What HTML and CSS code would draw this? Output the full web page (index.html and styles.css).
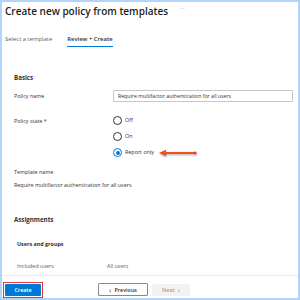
FILE: index.html
```html
<!DOCTYPE html>
<html>
<head>
<meta charset="utf-8">
<link rel="stylesheet" href="styles.css">
</head>
<body>
<div class="frame">
  <div class="header">
    <h1 class="title">Create new policy from templates</h1>
    <span class="more">···</span>
  </div>
  <div class="tabs">
    <span class="tab">Select a template</span>
    <span class="tab active">Review + Create</span>
  </div>
  <div class="content">
    <h2 class="section">Basics</h2>
    <div class="row name-row">
      <span class="label">Policy name</span>
      <div class="input">Require multifactor authentication for all users</div>
    </div>
    <div class="row state-row">
      <span class="label">Policy state *</span>
      <div class="radios">
        <div class="radio"><span class="circle"></span><span>Off</span></div>
        <div class="radio"><span class="circle"></span><span>On</span></div>
        <div class="radio checked"><span class="circle"></span><span>Report only</span>
          <svg class="arrow" width="42" height="12" viewBox="0 0 42 12">
            <defs>
              <filter id="sh" x="-20%" y="-50%" width="140%" height="200%">
                <feDropShadow dx="0.5" dy="1" stdDeviation="0.8" flood-color="#000" flood-opacity="0.35"/>
              </filter>
            </defs>
            <g filter="url(#sh)">
              <line x1="7" y1="6" x2="38" y2="6" stroke="#f0501c" stroke-width="2" stroke-linecap="round"/>
              <polygon points="2,6 9,2.8 9,9.2" fill="#f0501c"/>
              <circle cx="38" cy="6" r="1.6" fill="#e8401a"/>
            </g>
          </svg>
        </div>
      </div>
    </div>
    <div class="label tname">Template name</div>
    <div class="label tvalue">Require multifactor authentication for all users</div>
    <h2 class="section assign">Assignments</h2>
    <h3 class="sub">Users and groups</h3>
    <div class="pair">
      <span class="plabel">Included users</span>
      <span class="pvalue">All users</span>
    </div>
  </div>
  <div class="footer">
    <div class="create-wrap"><button class="btn primary">Create</button></div>
    <button class="btn prev"><span class="chev">&lsaquo;</span>Previous</button>
    <button class="btn next">Next<span class="chev">&rsaquo;</span></button>
  </div>
</div>
</body>
</html>
```
FILE: styles.css
```css
html, body {
  margin: 0;
  padding: 0;
  background: #fff;
}
body {
  font-family: "Open Sans", "Noto Sans", sans-serif;
  color: #323130;
}
.frame {
  width: 300px;
  height: 300px;
  box-sizing: border-box;
  border: 2px solid #b1d4f8;
  display: flex;
  flex-direction: column;
  position: relative;
  overflow: hidden;
}
.header {
  display: flex;
  align-items: flex-start;
  padding: 1px 0 0 3px;
  height: 20px;
  flex: none;
}
.title {
  margin: 0;
  font-size: 10px;
  font-weight: 600;
  line-height: 16px;
  color: #201f1e;
}
.more {
  font-size: 6px;
  color: #8a8886;
  margin-left: 12px;
  line-height: 10px;
}
.tabs {
  display: flex;
  gap: 15px;
  padding: 12px 0 0 3px;
  height: 17px;
  flex: none;
}
.tab {
  font-size: 5.9px;
  color: #605e5c;
  line-height: 8px;
  height: 11px;
}
.tab.active {
  font-weight: 600;
  color: #323130;
  border-bottom: 1.5px solid #0078d4;
}
.content {
  flex: 1;
  min-height: 0;
  padding: 22px 0 0 12px;
  font-size: 5.4px;
}
.section {
  margin: 0;
  font-size: 6.2px;
  font-weight: 700;
  line-height: 8px;
  color: #323130;
}
.label {
  font-size: 5.4px;
  color: #323130;
  line-height: 8px;
}
.row {
  display: flex;
}
.row .label {
  width: 99px;
}
.name-row {
  margin-top: 8px;
  align-items: center;
}
.input {
  width: 180px;
  height: 12px;
  box-sizing: border-box;
  border: 1px solid #c8c6c4;
  border-radius: 1px;
  font-size: 5.2px;
  line-height: 10px;
  padding-left: 4px;
  color: #323130;
  white-space: nowrap;
}
.state-row {
  margin-top: 14px;
}
.state-row .label {
  margin-top: 1px;
}
.radios {
  display: flex;
  flex-direction: column;
  gap: 7px;
}
.radio {
  display: flex;
  align-items: center;
  gap: 3px;
  font-size: 5.4px;
  line-height: 9px;
  position: relative;
}
.circle {
  width: 9px;
  height: 9px;
  box-sizing: border-box;
  border: 1px solid #323130;
  border-radius: 50%;
  position: relative;
}
.checked .circle {
  border-color: #0078d4;
}
.checked .circle::after {
  content: "";
  position: absolute;
  left: 1.5px;
  top: 1.5px;
  width: 4px;
  height: 4px;
  border-radius: 50%;
  background: #0078d4;
}
.arrow {
  position: absolute;
  left: 44px;
  top: -1px;
}
.tname {
  margin-top: 11px;
}
.tvalue {
  margin-top: 5px;
}
.assign {
  margin-top: 27px;
}
.sub {
  margin: 16px 0 0 3px;
  font-size: 5.4px;
  font-weight: 700;
  line-height: 8px;
}
.pair {
  display: flex;
  margin: 14px 0 0 3px;
  font-size: 5.4px;
  line-height: 8px;
  color: #605e5c;
}
.plabel {
  width: 90px;
}
.footer {
  border-top: 1px solid #edebe9;
  height: 23px;
  flex: none;
  box-sizing: border-box;
  display: flex;
  align-items: flex-start;
  padding: 6px 0 0 1px;
}
.create-wrap {
  border: 1px solid #e03b3b;
  padding: 1px;
  display: flex;
}
.btn {
  font-family: "Open Sans", "Noto Sans", sans-serif;
  font-size: 5.4px;
  font-weight: 600;
  height: 12px;
  border-radius: 1px;
  padding: 0;
  display: flex;
  align-items: center;
  justify-content: center;
  gap: 3px;
}
.primary {
  width: 36px;
  background: #0078d4;
  color: #fff;
  border: none;
}
.prev {
  width: 50px;
  height: 13px;
  margin-left: 55px;
  margin-top: 1px;
  background: #fff;
  border: 1px solid #8a8886;
  color: #323130;
}
.next {
  width: 38px;
  margin-left: 4px;
  margin-top: 2px;
  background: #f3f2f1;
  border: none;
  color: #a19f9d;
}
.chev {
  font-size: 8px;
  line-height: 8px;
  font-weight: 400;
}
```
